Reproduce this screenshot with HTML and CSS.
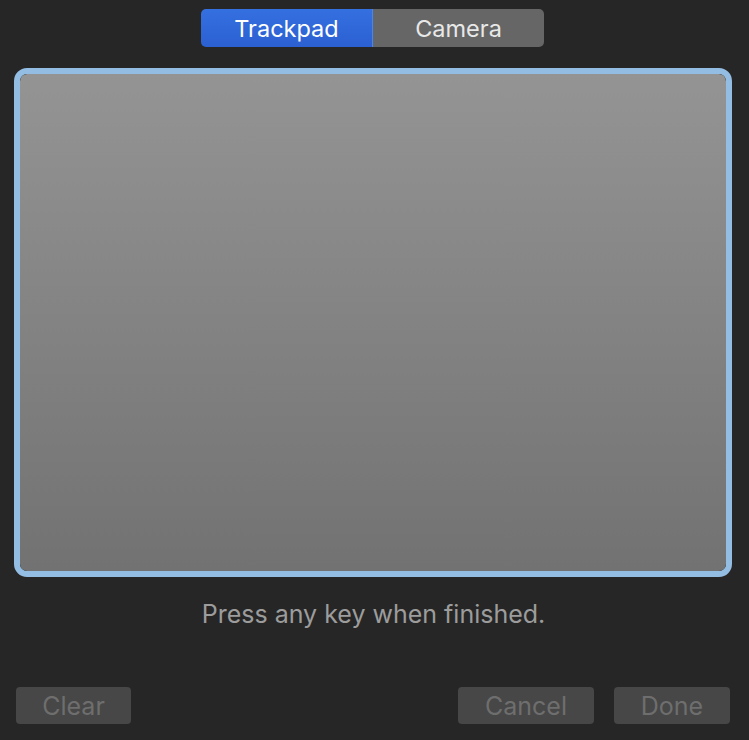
FILE: index.html
```html
<!DOCTYPE html>
<html>
<head>
<meta charset="utf-8">
<link rel="stylesheet" href="styles.css">
</head>
<body>
<div class="window">
  <div class="seg-row">
    <div class="segmented">
      <div class="seg seg-active">Trackpad</div>
      <div class="seg seg-inactive">Camera</div>
    </div>
  </div>
  <div class="pad"><div class="pad-inner"></div></div>
  <div class="hint">Press any key when finished.</div>
  <div class="footer">
    <div class="btn btn-clear">Clear</div>
    <div class="spacer"></div>
    <div class="btn btn-cancel">Cancel</div>
    <div class="btn btn-done">Done</div>
  </div>
</div>
</body>
</html>
```

FILE: styles.css
```css
html, body {
  margin: 0;
  padding: 0;
  background: #262626;
  width: 749px;
  height: 740px;
  overflow: hidden;
  font-family: Inter, "Liberation Sans", sans-serif;
}
.window {
  display: flex;
  flex-direction: column;
}
.seg-row {
  display: flex;
  padding: 9px 0 0 201px;
}
.segmented {
  display: flex;
  height: 38px;
  border-radius: 5px;
  overflow: hidden;
}
.seg {
  display: flex;
  align-items: center;
  justify-content: center;
  font-size: 23.5px;
  line-height: 1;
  padding-top: 2px;
  box-sizing: border-box;
}
.seg-active {
  width: 172px;
  background: linear-gradient(#3570e0, #2b60d2);
  color: #ffffff;
  border-right: 1px solid #4a85ea;
}
.seg-inactive {
  width: 171px;
  background: #666666;
  color: #e8e8e8;
}
.pad {
  margin: 21px 17px 0 14px;
  height: 497px;
  border: 6px solid #93bde2;
  border-radius: 13px;
  overflow: hidden;
}
.pad-inner {
  height: 100%;
  background: linear-gradient(#949494, #727272);
  border-radius: 7px;
}
.hint {
  margin-top: 21px;
  text-align: center;
  color: #9c9c9c;
  font-size: 25px;
  line-height: 32px;
  padding-right: 2px;
}
.footer {
  display: flex;
  margin-top: 57px;
  padding: 0 19px 0 16px;
  gap: 20px;
}
.spacer { flex: 1; }
.btn {
  height: 37px;
  box-sizing: border-box;
  padding-top: 2px;
  border-radius: 4px;
  background: #474747;
  color: #6e6e6e;
  font-size: 25px;
  line-height: 1;
  display: flex;
  align-items: center;
  justify-content: center;
}
.btn-clear { width: 115px; }
.btn-cancel { width: 136px; }
.btn-done { width: 116px; }
```
